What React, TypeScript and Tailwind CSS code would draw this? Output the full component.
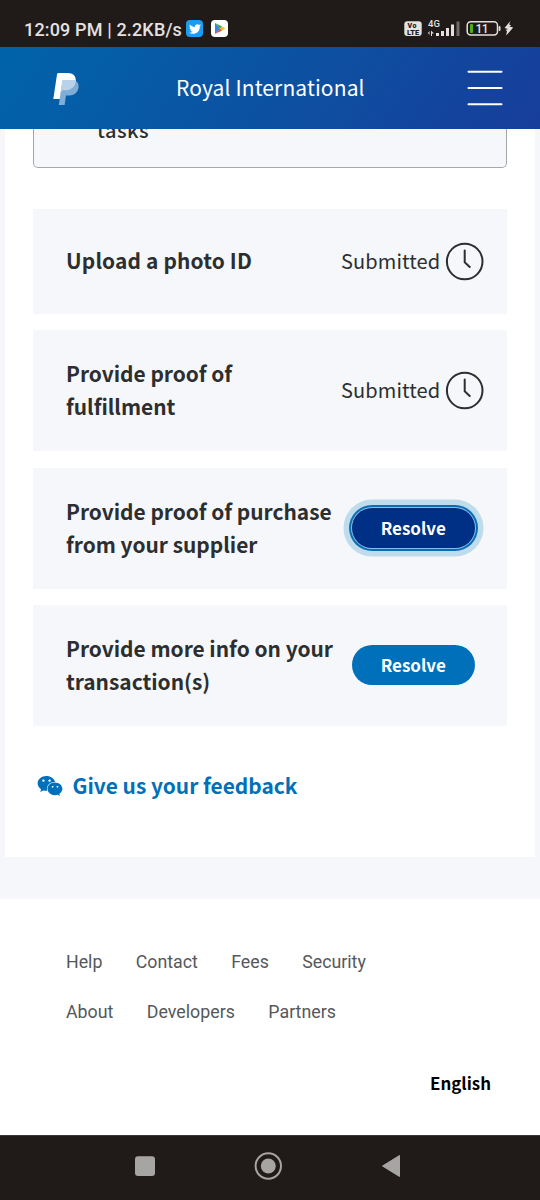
import type { ReactNode } from 'react';
import { FaTwitter, FaWeixin } from 'react-icons/fa';

function StatusBar() {
  return (
    <div className="flex h-[46.5px] shrink-0 items-start bg-[#201b19] pl-6 pt-[19px] font-['Roboto',sans-serif] text-[#e4e1e0]">
      <span className="w-[162px] whitespace-nowrap text-[18px] font-medium leading-[21px] tracking-[0.15px]">12:09 PM | 2.2KB/s</span>
      <span className="mt-px flex size-[17px] items-center justify-center rounded-[4px] bg-[#1d9bf0] text-white">
        <FaTwitter size={12} />
      </span>
      <svg className="ml-2 mt-px" width="17" height="17" viewBox="0 0 17 17">
        <rect width="17" height="17" rx="4" fill="#fff" />
        <path d="M4 3v11l5-5.5z" fill="#3885e8" />
        <path d="M4 3l7 3.6L9 8.5z" fill="#2da653" />
        <path d="M4 14l7-3.6L9 8.5z" fill="#e8453c" />
        <path d="M11 6.6l3.5 1.9L11 10.4 9 8.5z" fill="#f9bb16" />
      </svg>
      <svg className="-mt-px ml-auto mr-[26px]" width="112" height="20" viewBox="402 18 112 20" fill="#e4e1e0">
        <rect x="404.3" y="21.2" width="17.4" height="14.8" rx="3" />
        <g fill="#201b19" fontFamily="Roboto" fontWeight="900" fontSize="7">
          <text x="407.5" y="28.3" textLength="9">Vo</text>
          <text x="407" y="34.6" textLength="12" lengthAdjust="spacingAndGlyphs">LTE</text>
        </g>
        <text x="428" y="27.2" fontFamily="Roboto" fontSize="9.5" fontWeight="500" textLength="12">4G</text>
        <path d="M428 33l1.5-2v4zM431 30.5l3 3h-2V36h-1zM436 33h3v3h-3zM441 31h3v5h-3zM446 28h3v8h-3zM451 24.5h3v11.5h-3z" />
        <path d="M456.5 21.5h3V36h-3z" opacity=".4" />
        <rect x="467.2" y="21.7" width="30.3" height="13.3" rx="3.5" fill="none" stroke="#e4e1e0" strokeWidth="1.5" />
        <rect x="470" y="24" width="3" height="9" rx="1" fill="#4cb016" />
        <rect x="498.7" y="26" width="1.8" height="5" rx="1" />
        <text x="475.5" y="33" fontFamily="Roboto" fontSize="12" fontWeight="500" textLength="13">11</text>
        <path d="M510.5 21l-6 7 3.5 1-2.5 1 1.5 1-.8 4.5 7-8-4-1 2-1-2-1z" />
      </svg>
    </div>
  );
}

function Header() {
  return (
    <header className="flex h-[82.5px] shrink-0 items-center bg-[linear-gradient(125deg,#0064aa_0%,#0d50a1_55%,#173d9b_100%)] text-white">
      <svg className="ml-[53px] mt-[5px]" width="27" height="34" viewBox="0 0 27 34">
        <path d="M5.5 0H15c5 0 8 3 7.8 7.5C22.5 14 17.5 17.3 12 17.3H9L7.3 26H.3L4 1.4Q4.2 0 5.5 0z" fill="#fff" />
        <path d="M10.8 7H21q2.8 1.1 4 3.3c2.3 5.5-2 12.2-8.5 12.2H13L11.6 32H5.8L9.3 8.2Q9.5 7 10.8 7z" fill="#7eaed7" />
        <path d="M10.8 7h12c0 6.7-4.8 10.3-10.8 10.3H9L7.4 21 9.3 8.2Q9.5 7 10.8 7z" fill="#b9d2ea" />
      </svg>
      <h1 className="-mt-px ml-[96px] w-[190px] whitespace-nowrap text-[21px] font-normal leading-7 tracking-[0.12px]">Royal International</h1>
      <svg className="ml-[101px]" width="36" height="36" viewBox="0 0 36 36" stroke="#fff" strokeWidth="2" strokeLinecap="round">
        <path d="M1.5 1.8h33M1.5 18h33M1.5 34.2h33" />
      </svg>
    </header>
  );
}

function Task({ children, action, tall = true }: { children: ReactNode; action: ReactNode; tall?: boolean }) {
  return (
    <section className={`flex items-center justify-between bg-[#f5f7fb] pl-[33px] ${tall ? 'h-[121px]' : 'h-[104.5px] tracking-[0.15px]'}`}>
      <h2 className="-mt-px whitespace-nowrap text-[20.9px] font-bold leading-[33px] text-[#2c2e2f]">{children}</h2>
      {action}
    </section>
  );
}

function Submitted() {
  return (
    <div className="mr-[23px] flex items-center">
      <span className="-mt-px w-[104px] whitespace-nowrap text-[20px] leading-7 tracking-[0.12px] text-[#2c2e2f]">Submitted</span>
      <svg width="39" height="39" viewBox="0 0 39 39" fill="none" stroke="#2c2e2f" strokeWidth="2" strokeLinecap="round" strokeLinejoin="round">
        <circle cx="19.7" cy="19.5" r="17.8" />
        <path d="M19.7 8.5v11.7l5 4.8" />
      </svg>
    </div>
  );
}

function Resolve({ focused = false }: { focused?: boolean }) {
  return (
    <button
      className={`mr-[32.5px] h-[40.5px] w-[122.5px] rounded-full text-[17px] font-bold leading-6 text-white ${
        focused
          ? 'bg-[#002f86] shadow-[0_0_0_1px_#86bfe6,0_0_0_3px_#0c6db5,0_0_0_8.5px_#bfdcec]'
          : '-mt-px bg-[#0070ba]'
      }`}
    >
      Resolve
    </button>
  );
}

export default function App() {
  return (
    <div className="flex h-[1200px] w-[540px] flex-col overflow-hidden bg-white font-['Noto_Sans_CJK_SC',sans-serif]">
      <StatusBar />
      <Header />
      <div className="h-[769.5px] shrink-0 bg-[#f5f7fb] px-[5px]">
        <main className="h-[728px] bg-white px-7">
          <div className="h-[38.5px] overflow-hidden rounded-b-[5px] border border-t-0 border-[#a4a7ab] bg-[#f5f7fb] pl-[63px]">
            <p className="-mt-[14px] text-[20px] font-medium leading-[30px] tracking-[0.5px] text-[#2c2e2f]">tasks</p>
          </div>
          <div className="mt-[41.5px] flex flex-col gap-[16.5px]">
            <Task tall={false} action={<Submitted />}>Upload a photo ID</Task>
            <Task action={<Submitted />}>Provide proof of<br />fulfillment</Task>
            <Task action={<Resolve focused />}>Provide proof of purchase<br />from your supplier</Task>
            <Task action={<Resolve />}>Provide more info on your<br />transaction(s)</Task>
          </div>
          <a className="mt-[43px] flex h-8 items-center text-[#0070ba]">
            <FaWeixin size={26} className="ml-[3.5px] mt-[2px]" />
            <span className="ml-[10px] whitespace-nowrap text-[20.9px] font-bold leading-8">Give us your feedback</span>
          </a>
        </main>
      </div>
      <footer className="h-[236.5px] shrink-0 bg-white px-[66px] pt-[51px]">
        <nav className="flex flex-col gap-[26px] font-['Roboto',sans-serif] text-[17.8px] leading-6 text-[#55585b]">
          <div className="flex gap-[33.3px]">
            <a>Help</a><a>Contact</a><a>Fees</a><a>Security</a>
          </div>
          <div className="flex gap-[33.5px]">
            <a>About</a><a>Developers</a><a>Partners</a>
          </div>
        </nav>
        <div className="-mr-[17px] mt-[47px] flex justify-end text-[16.9px] font-bold leading-6 text-black">English</div>
      </footer>
      <div className="flex h-[65px] shrink-0 border-t border-[#3b3836] bg-[#201b19]">
        <svg width="540" height="64" viewBox="0 1136 540 64" fill="#a7a5a3">
          <rect x="135" y="1156.2" width="20" height="19.8" rx="3" />
          <circle cx="268.3" cy="1166" r="7.5" />
          <circle cx="268.3" cy="1166" r="12.7" fill="none" stroke="#a7a5a3" strokeWidth="2" />
          <path d="M382.5 1166L399.5 1155.5V1176.5z" stroke="#a7a5a3" strokeLinejoin="round" />
        </svg>
      </div>
    </div>
  );
}
